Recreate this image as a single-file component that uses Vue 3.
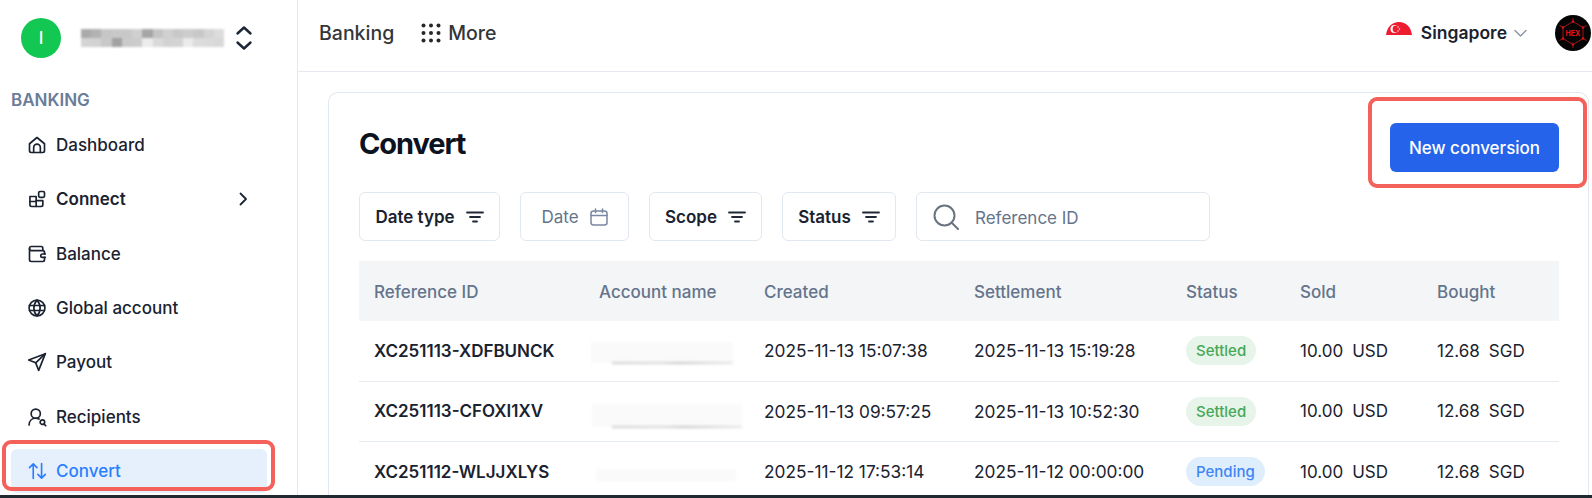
<script setup>
const mosaic = [
  '#aaa','#b2b2b2','#c6c6c6','#c8c8c8','#c8c8c8','#d0d0d0','#a6a6a6','#c4c4c4','#d0d0d0','#c8c8c8','#cdcdcd','#c8c8c8','#d4d4d4','#dcdcdc',
  '#d4d4d4','#d2d2d2','#c8c8c8','#a2a2a2','#cacaca','#cccccc','#ececec','#dadada','#d2d2d2','#d4d4d4','#ebebeb','#dcdcdc','#dadada','#d8d8d8'
]
const nav = [
  { label: 'Dashboard', paths: ['M3 10.5 12 3l9 7.5V19a2 2 0 0 1-2 2H5a2 2 0 0 1-2-2z', 'M8 21v-6a4 4 0 0 1 8 0v6'] },
  { label: 'Connect', bold: true, arrow: true, paths: ['M3.5 9H11v12H5.5a2 2 0 0 1-2-2z', 'M11 14h8v5a2 2 0 0 1-2 2h-6', 'M3.5 15H11', 'M15.5 3h4a1.5 1.5 0 0 1 1.5 1.5v4a1.5 1.5 0 0 1-1.5 1.5h-4a1.5 1.5 0 0 1-1.5-1.5v-4A1.5 1.5 0 0 1 15.500 3z'] },
  { label: 'Balance', paths: ['M19 7V5a2 2 0 0 0-2-2H5a2 2 0 0 0-2 2v14a2 2 0 0 0 2 2h14a2 2 0 0 0 2-2v-3', 'M3 5.500A2.500 2.500 0 0 0 5.500 8H19a2 2 0 0 1 2 2v2', 'M22 12h-3.500a2 2 0 0 0 0 4H22'] },
  { label: 'Global account', paths: ['M12 2.500a9.500 9.500 0 1 0 0 19 9.500 9.500 0 0 0 0-19z', 'M12 2.500c-5 5.500-5 13.500 0 19 5-5.500 5-13.500 0-19z', 'M3 9h18M3 15h18'] },
  { label: 'Payout', paths: ['M22 2 2 9.500l8.500 3.500 3.500 9z', 'M22 2 10.500 13'] },
  { label: 'Recipients', paths: ['M10.500 2.500a5.500 5.500 0 1 0 0 11 5.500 5.500 0 0 0 0-11z', 'M2.500 21.500c0-5 3.500-8 8-8 1.500 0 3 .4 4 1', 'M18.500 15.500a2.700 2.700 0 1 0 0 5.400 2.700 2.700 0 0 0 0-5.400z', 'M20.500 20.500l2 2'] },
  { label: 'Convert', active: true, paths: ['M7.500 21V3.500M3 8l4.500-4.500L12 8', 'M17.500 3v17.500M13 16l4.500 4.500L22 16'] }
]
const filters = [
  { label: 'Date type', cls: 'f-date-type' },
  { label: 'Scope', cls: 'f-scope' },
  { label: 'Status', cls: 'f-status' }
]
const columns = ['Reference ID', 'Account name', 'Created', 'Settlement', 'Status', 'Sold', 'Bought']
const rows = [
  { id: 'XC251113-XDFBUNCK', created: '2025-11-13 15:07:38', settled: '2025-11-13 15:19:28', status: 'Settled', smudge: 'a' },
  { id: 'XC251113-CFOXI1XV', created: '2025-11-13 09:57:25', settled: '2025-11-13 10:52:30', status: 'Settled', smudge: 'b' },
  { id: 'XC251112-WLJJXLYS', created: '2025-11-12 17:53:14', settled: '2025-11-12 00:00:00', status: 'Pending', smudge: 'c' }
]
</script>

<template>
  <div class="page">
    <div class="shell">
      <aside class="sidebar">
        <div class="brand">
          <div class="brand-avatar">I</div>
          <div class="mosaic">
            <i v-for="(c, i) in mosaic" :key="i" :style="{ background: c }"></i>
          </div>
          <svg class="updown" width="18" height="26" viewBox="0 0 18 26" fill="none" stroke="#1b2636" stroke-width="2.4" stroke-linecap="round" stroke-linejoin="round">
            <path d="M2.500 8.500 9 2.500l6.500 6M2.500 17.500 9 23.500l6.500-6" />
          </svg>
        </div>
        <div class="section">BANKING</div>
        <nav class="nav">
          <a v-for="item in nav" :key="item.label" class="nav-item" :class="{ active: item.active, bold: item.bold }">
            <svg width="20" height="20" viewBox="0 0 24 24" fill="none" stroke="currentColor" stroke-width="2" stroke-linecap="round" stroke-linejoin="round">
              <path v-for="d in item.paths" :key="d" :d="d" />
            </svg>
            <span>{{ item.label }}</span>
            <svg v-if="item.arrow" class="nav-arrow" width="10" height="14" viewBox="0 0 10 14" fill="none" stroke="#1b2636" stroke-width="1.800" stroke-linecap="round" stroke-linejoin="round">
              <path d="M2.500 1.500 8 7l-5.500 5.500" />
            </svg>
            <div v-if="item.active" class="mark mark-nav"></div>
          </a>
        </nav>
      </aside>

      <main class="main">
        <header class="topbar">
          <span class="top-link">Banking</span>
          <svg class="dots" width="20" height="20" viewBox="0 0 20 20" fill="#27272a">
            <circle cx="2.500" cy="2.500" r="2" /><circle cx="10" cy="2.500" r="2" /><circle cx="17.500" cy="2.500" r="2" />
            <circle cx="2.500" cy="10" r="2" /><circle cx="10" cy="10" r="2" /><circle cx="17.500" cy="10" r="2" />
            <circle cx="2.500" cy="17.500" r="2" /><circle cx="10" cy="17.500" r="2" /><circle cx="17.500" cy="17.500" r="2" />
          </svg>
          <span class="top-link">More</span>
          <div class="spacer"></div>
          <svg class="flag" width="26" height="14" viewBox="0 0 26 14">
            <path d="M0 13C1 5 6 0 13 0s12 5 13 13z" fill="#ee1c30" />
            <circle cx="8.500" cy="7" r="4" fill="#fff" />
            <circle cx="10" cy="7" r="3.400" fill="#ee1c30" />
            <circle cx="12" cy="5" r=".7" fill="#fff" /><circle cx="13.500" cy="7" r=".7" fill="#fff" /><circle cx="12" cy="9" r=".7" fill="#fff" />
          </svg>
          <span class="region">Singapore</span>
          <svg class="region-caret" width="13" height="8" viewBox="0 0 13 8" fill="none" stroke="#8a94a3" stroke-width="1.400" stroke-linecap="round" stroke-linejoin="round">
            <path d="M1 1.500 6.500 7 12 1.500" />
          </svg>
          <svg class="hex" width="36" height="36" viewBox="0 0 36 36">
            <circle cx="18" cy="18" r="18" fill="#050505" />
            <g fill="none" stroke="#a31217" stroke-width="1">
              <path d="M18 6.500 28 12.500v11l-10 6-10-6v-11z" />
              <path d="M18 6.500V3M28 12.500l3.500-2M28 23.500l3.500 2M18 29.500V33M8 23.500l-3.500 2M8 12.500l-3.500-2" />
            </g>
            <g fill="#d8141a">
              <circle cx="18" cy="6.500" r="1.200" /><circle cx="28" cy="12.500" r="1.200" /><circle cx="28" cy="23.500" r="1.200" />
              <circle cx="18" cy="29.500" r="1.200" /><circle cx="8" cy="23.500" r="1.200" /><circle cx="8" cy="12.500" r="1.200" />
            </g>
            <text x="18" y="20.500" text-anchor="middle" class="hex-text">HEX</text>
          </svg>
        </header>

        <div class="content">
          <section class="card">
            <div class="card-head">
              <h1>Convert</h1>
              <button class="primary" type="button">
                New conversion
                <div class="mark mark-btn"></div>
              </button>
            </div>

            <div class="filters">
              <button class="filter" :class="filters[0].cls" type="button">
                {{ filters[0].label }}
                <svg width="18" height="12" viewBox="0 0 18 12" fill="none" stroke="#1f2937" stroke-width="1.800" stroke-linecap="round"><path d="M1 1.500h16M4 6h10M7 10.500h4" /></svg>
              </button>
              <button class="filter f-date" type="button">
                Date
                <svg width="18" height="18" viewBox="0 0 18 18" fill="none" stroke="#7b88a1" stroke-width="1.500" stroke-linecap="round"><rect x="1" y="3" width="16" height="14" rx="2.500" /><path d="M1 7.500h16M5.500 1v3.500M12.500 1v3.500" /></svg>
              </button>
              <button v-for="f in filters.slice(1)" :key="f.label" class="filter" :class="f.cls" type="button">
                {{ f.label }}
                <svg width="18" height="12" viewBox="0 0 18 12" fill="none" stroke="#1f2937" stroke-width="1.800" stroke-linecap="round"><path d="M1 1.500h16M4 6h10M7 10.500h4" /></svg>
              </button>
              <label class="search">
                <svg width="26" height="26" viewBox="0 0 26 26" fill="none" stroke="#6b7280" stroke-width="2" stroke-linecap="round"><circle cx="11.500" cy="11.500" r="10" /><path d="m19 19 6 6" /></svg>
                <input type="text" placeholder="Reference ID" />
              </label>
            </div>

            <div class="table">
              <div class="row head">
                <div v-for="c in columns" :key="c" class="cell">{{ c }}</div>
              </div>
              <div v-for="r in rows" :key="r.id" class="row">
                <div class="cell ref">{{ r.id }}</div>
                <div class="cell account"><div class="smudge" :class="r.smudge"><i></i></div></div>
                <div class="cell date">{{ r.created }}</div>
                <div class="cell date">{{ r.settled }}</div>
                <div class="cell"><span class="badge" :class="r.status.toLowerCase()">{{ r.status }}</span></div>
                <div class="cell amount"><span>10.00</span><span>USD</span></div>
                <div class="cell amount"><span>12.68</span><span>SGD</span></div>
              </div>
            </div>
          </section>
        </div>
      </main>
    </div>
    <div class="bottom-bar"></div>
  </div>
</template>

<style>
html, body { margin: 0; background: #fff; overflow: hidden; }
</style>

<style scoped>
.page {
  width: 1592px;
  height: 498px;
  display: flex;
  flex-direction: column;
  overflow: hidden;
  font-family: Inter, "Liberation Sans", sans-serif;
  color: #1a2230;
  background: #fff;
}
.shell { flex: 1; min-height: 0; display: flex; overflow: hidden; }
.bottom-bar { height: 3px; background: #20292f; flex: none; }

.sidebar {
  width: 256px;
  flex: none;
  border-right: 1px solid #e5e8ee;
  display: flex;
  flex-direction: column;
  padding: 0 30px 0 11px;
}
.brand { height: 76px; display: flex; align-items: center; flex: none; }
.brand-avatar {
  width: 40px;
  height: 40px;
  margin-left: 10px;
  border-radius: 50%;
  background: #12c752;
  color: #fff;
  font-size: 17px;
  font-weight: 500;
  display: flex;
  align-items: center;
  justify-content: center;
}
.mosaic {
  width: 143px;
  height: 18px;
  margin-left: 20px;
  display: grid;
  grid-template-columns: repeat(14, 1fr);
  grid-template-rows: 1fr 1fr;
  filter: blur(1.200px);
}
.updown { margin-left: 11px; }
.section {
  font-size: 17px;
  font-weight: 600;
  color: #6b7c98;
  line-height: 20px;
  margin-top: 14px;
  margin-bottom: 13px;
  flex: none;
}
.nav { display: flex; flex-direction: column; gap: 10.330px; }
.nav-item {
  position: relative;
  height: 44px;
  flex: none;
  display: flex;
  align-items: center;
  gap: 9px;
  padding: 0 16px;
  font-size: 17px;
  font-weight: 500;
  color: #1a2230;
  border-radius: 6px;
}
.nav-item.bold { font-weight: 600; }
.nav-arrow { margin-left: auto; margin-right: 3px; }
.nav-item.active { background: #e6f0fd; color: #2b7fff; }
.mark {
  position: absolute;
  border: 4px solid #f4605a;
  border-radius: 9px;
  box-sizing: border-box;
  pointer-events: none;
}
.mark-nav { top: -9px; left: -9px; right: -8px; bottom: 2px; }
.mark-btn { top: -26px; left: -22px; right: -28px; bottom: -16px; }

.main { flex: 1; min-width: 0; display: flex; flex-direction: column; }
.topbar {
  height: 65px;
  flex: none;
  border-bottom: 1px solid #e5e8ee;
  display: flex;
  align-items: center;
  padding: 0 1px 6px 21px;
}
.top-link { font-size: 19.500px; font-weight: 500; color: #333639; }
.dots { margin-left: 27px; margin-right: 7px; }
.spacer { flex: 1; }
.flag { margin-bottom: 7px; }
.region { font-size: 17.500px; font-weight: 600; color: #1a2230; margin-left: 9px; }
.region-caret { margin-left: 7px; }
.hex { margin-left: 28px; }
.hex-text { font-family: Inter, sans-serif; font-size: 7px; font-weight: 800; fill: #d8141a; }

.content { flex: 1; min-height: 0; padding: 20px 3px 0 30px; }
.card {
  border: 1px solid #e2e8f0;
  border-bottom: 0;
  border-radius: 10px 10px 0 0;
  padding: 30px 29px 0 30px;
}
.card-head { display: flex; justify-content: space-between; align-items: center; }
h1 {
  margin: 0;
  font-size: 29px;
  font-weight: 700;
  letter-spacing: -1.100px;
  color: #0b1220;
  line-height: 36px;
  align-self: flex-start;
  padding-top: 3px;
}
.primary {
  position: relative;
  width: 169px;
  height: 49px;
  border: 0;
  border-radius: 6px;
  background: #2563eb;
  color: #fff;
  font: 500 17px Inter, sans-serif;
}
.filters { display: flex; margin-top: 20px; height: 49px; }
.filter {
  height: 49px;
  box-sizing: border-box;
  border: 1px solid #e2e8f0;
  border-radius: 6px;
  background: #fff;
  display: flex;
  align-items: center;
  justify-content: center;
  gap: 11px;
  font: 600 17px Inter, sans-serif;
  color: #1a2230;
  padding: 0;
}
.f-date-type { width: 141px; }
.f-date { width: 109px; margin-left: 20px; font-weight: 400; color: #64748b; }
.f-scope { width: 113px; margin-left: 20px; }
.f-status { width: 114px; margin-left: 20px; }
.search {
  width: 294px;
  margin-left: 20px;
  box-sizing: border-box;
  border: 1px solid #e2e8f0;
  border-radius: 6px;
  display: flex;
  align-items: center;
  padding-left: 16px;
  gap: 16px;
}
.search input {
  border: 0;
  outline: 0;
  flex: 1;
  min-width: 0;
  font: 400 17px Inter, sans-serif;
  color: #1a2230;
  background: transparent;
  padding: 2px 0 0;
}
.search input::placeholder { color: #64748b; opacity: 1; }

.table { margin-top: 20px; }
.row {
  display: grid;
  grid-template-columns: 225px 165px 210px 212px 114px 137px 137px;
  height: 60.500px;
  box-sizing: border-box;
  align-items: center;
  border-bottom: 1px solid #e6ebf2;
  font-size: 17px;
}
.row.head {
  height: 60px;
  border-bottom: 0;
  background: #f3f5f7;
  color: #64748b;
  font-weight: 500;
  padding-top: 1px;
}
.cell { padding-left: 15px; white-space: nowrap; }
.ref { font-weight: 600; }
.date { font-size: 17.300px; }
.amount { display: flex; gap: 9px; }
.account { position: relative; height: 100%; }
.smudge { position: absolute; background: #fafafa; filter: blur(1.500px); }
.smudge i {
  position: absolute;
  right: 0;
  bottom: -1px;
  height: 2px;
  background: linear-gradient(90deg, #ccc, #d6d6d6 40%, #c2c2c2 55%, #e4e4e4);
}
.smudge.a { left: 7px; top: 21px; width: 142px; height: 21px; }
.smudge.a i { left: 21px; }
.smudge.b { left: 8px; top: 22px; width: 150px; height: 23px; }
.smudge.b i { left: 20px; }
.smudge.c { left: 12px; top: 27px; width: 140px; height: 12px; }
.smudge.c i { display: none; }
.badge {
  display: inline-flex;
  align-items: center;
  height: 29px;
  padding: 0 10px;
  border-radius: 15px;
  font-size: 15px;
  font-weight: 500;
}
.badge.settled { background: #e6f4ea; color: #47a857; }
.badge.pending { background: #dfeefd; color: #3f85f5; }
</style>
